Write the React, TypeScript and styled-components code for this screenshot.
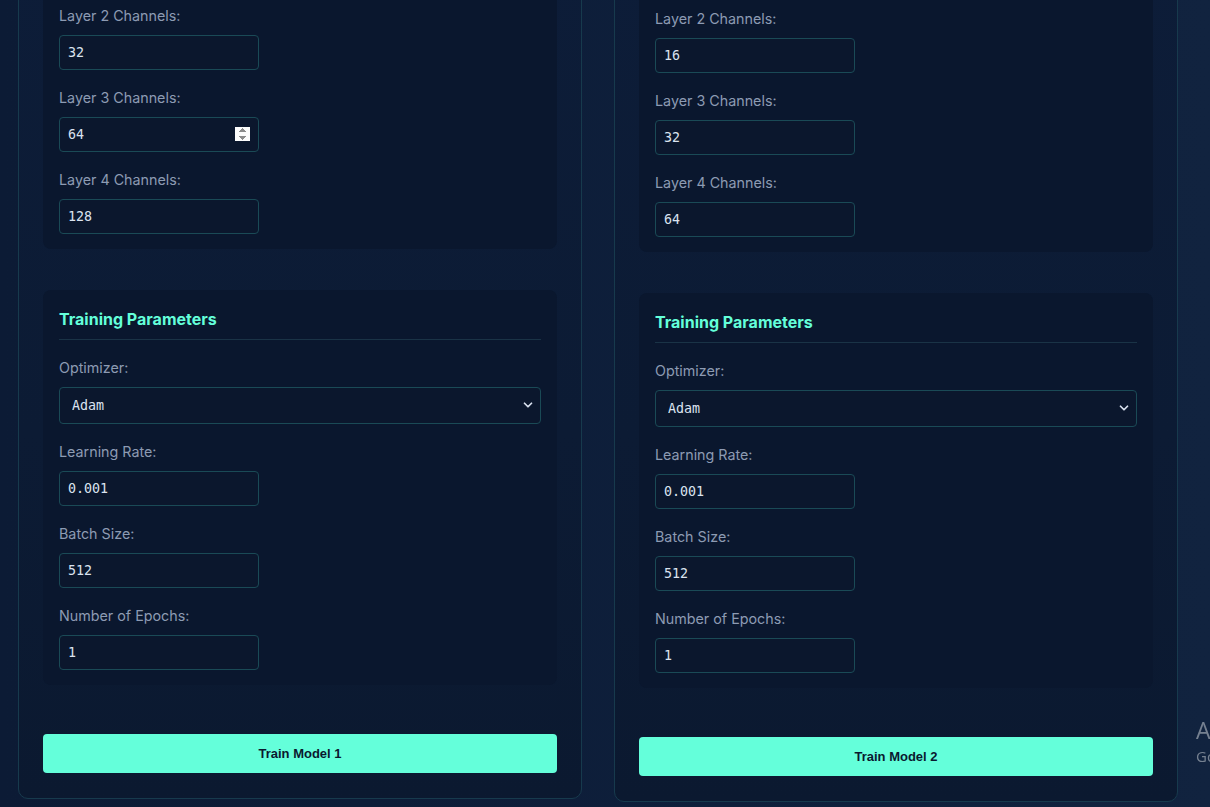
import React from "react";
import styled, { createGlobalStyle } from "styled-components";
import { ChevronDown } from "lucide-react";

const GlobalStyle = createGlobalStyle`
  html, body {
    margin: 0;
    padding: 0;
    height: 100%;
    overflow: hidden;
    background: linear-gradient(90deg, #0c1b35 0%, #0e1f3b 60%, #11233f 100%);
    font-family: Inter, "Noto Sans", sans-serif;
  }
  * { box-sizing: border-box; }
`;

const Page = styled.div`
  display: grid;
  grid-template-columns: 564px 564px;
  column-gap: 32px;
  align-items: start;
  padding-left: 18px;
  margin-top: -117px;
`;

const Card = styled.div<{ $shift?: number }>`
  margin-top: ${(p) => p.$shift ?? 0}px;
  border: 1px solid #173a4d;
  border-radius: 10px;
  background: linear-gradient(180deg, #0d1d39 0%, #0c1b34 60%, #0b1930 100%);
  padding: 24px 24px 25px;
  display: flex;
  flex-direction: column;
`;

const Section = styled.section`
  background: #0a172e;
  border-radius: 8px;
  padding: 16px 16px 15px;
  display: flex;
  flex-direction: column;
  & + & {
    margin-top: 41px;
  }
`;

const SectionTitle = styled.h3`
  margin: 3px 0 18px;
  font-family: Inter, sans-serif;
  font-size: 16px;
  font-weight: 700;
  line-height: 20px;
  color: #64ffda;
  padding-bottom: 10px;
  border-bottom: 1px solid #1a3346;
`;

const Field = styled.div`
  display: flex;
  flex-direction: column;
  & + & {
    margin-top: 18px;
  }
`;

const Label = styled.label`
  font-family: Inter, sans-serif;
  font-size: 14.3px;
  line-height: 20px;
  color: #8d9bb3;
  margin-bottom: 9px;
`;

const NumberInput = styled.input<{ $spin?: boolean }>`
  width: 200px;
  height: 35px;
  background: #0b172d;
  border: 1px solid #1a4a56;
  border-radius: 4px;
  padding: 0 8px;
  color: #dbe3f0;
  font-family: "DejaVu Sans Mono", "Liberation Mono", monospace;
  font-size: 13.33px;
  outline: none;
  color-scheme: light;
  &::-webkit-inner-spin-button,
  &::-webkit-outer-spin-button {
    opacity: ${(p) => (p.$spin ? 1 : 0)};
    -webkit-appearance: ${(p) => (p.$spin ? "inner-spin-button" : "none")};
  }
`;

const SelectWrap = styled.div`
  position: relative;
  width: 100%;
`;

const Select = styled.select`
  width: 100%;
  height: 37px;
  appearance: none;
  background: #0b172d;
  border: 1px solid #1a4a56;
  border-radius: 4px;
  padding: 0 12px;
  color: #dbe3f0;
  font-family: "DejaVu Sans Mono", "Liberation Mono", monospace;
  font-size: 13.33px;
  outline: none;
`;

const Chevron = styled(ChevronDown)`
  position: absolute;
  right: 6px;
  top: 11px;
  width: 14px;
  height: 14px;
  color: #d8e0ee;
  pointer-events: none;
`;

const TrainButton = styled.button`
  margin-top: 49px;
  height: 39px;
  border: none;
  border-radius: 4px;
  background: #64ffda;
  color: #0a192f;
  font-family: "Liberation Sans", Arial, sans-serif;
  font-weight: 700;
  font-size: 13px;
  cursor: pointer;
`;

const Watermark = styled.div`
  position: fixed;
  left: 1196px;
  top: 714px;
  color: rgba(200, 205, 212, 0.55);
  font-family: "Open Sans", "Noto Sans", sans-serif;
  white-space: nowrap;
  pointer-events: none;
`;

const WatermarkTitle = styled.div`
  font-size: 23px;
  line-height: 32px;
`;

const WatermarkSub = styled.div`
  font-size: 15px;
  line-height: 20px;
`;

type ModelCfg = {
  id: number;
  layers: number[];
  spinLayer?: number;
  shift?: number;
};

const models: ModelCfg[] = [
  { id: 1, layers: [16, 32, 64, 128], spinLayer: 3 },
  { id: 2, layers: [8, 16, 32, 64], shift: 3 },
];

function ModelCard({ m }: { m: ModelCfg }) {
  return (
    <Card $shift={m.shift}>
      <Section>
        {m.layers.map((v, i) => (
          <Field key={i}>
            <Label>Layer {i + 1} Channels:</Label>
            <NumberInput type="number" defaultValue={v} $spin={m.spinLayer === i + 1} />
          </Field>
        ))}
      </Section>
      <Section>
        <SectionTitle>Training Parameters</SectionTitle>
        <Field>
          <Label>Optimizer:</Label>
          <SelectWrap>
            <Select defaultValue="adam">
              <option value="adam">Adam</option>
              <option value="sgd">SGD</option>
              <option value="rmsprop">RMSprop</option>
            </Select>
            <Chevron strokeWidth={3} />
          </SelectWrap>
        </Field>
        <Field>
          <Label>Learning Rate:</Label>
          <NumberInput type="number" defaultValue="0.001" step="0.001" />
        </Field>
        <Field>
          <Label>Batch Size:</Label>
          <NumberInput type="number" defaultValue={512} />
        </Field>
        <Field>
          <Label>Number of Epochs:</Label>
          <NumberInput type="number" defaultValue={1} />
        </Field>
      </Section>
      <TrainButton>Train Model {m.id}</TrainButton>
    </Card>
  );
}

export default function App() {
  return (
    <>
      <GlobalStyle />
      <Page>
        {models.map((m) => (
          <ModelCard key={m.id} m={m} />
        ))}
      </Page>
      <Watermark>
        <WatermarkTitle>Activate Windows</WatermarkTitle>
        <WatermarkSub>Go to Settings to activate Windows.</WatermarkSub>
      </Watermark>
    </>
  );
}
